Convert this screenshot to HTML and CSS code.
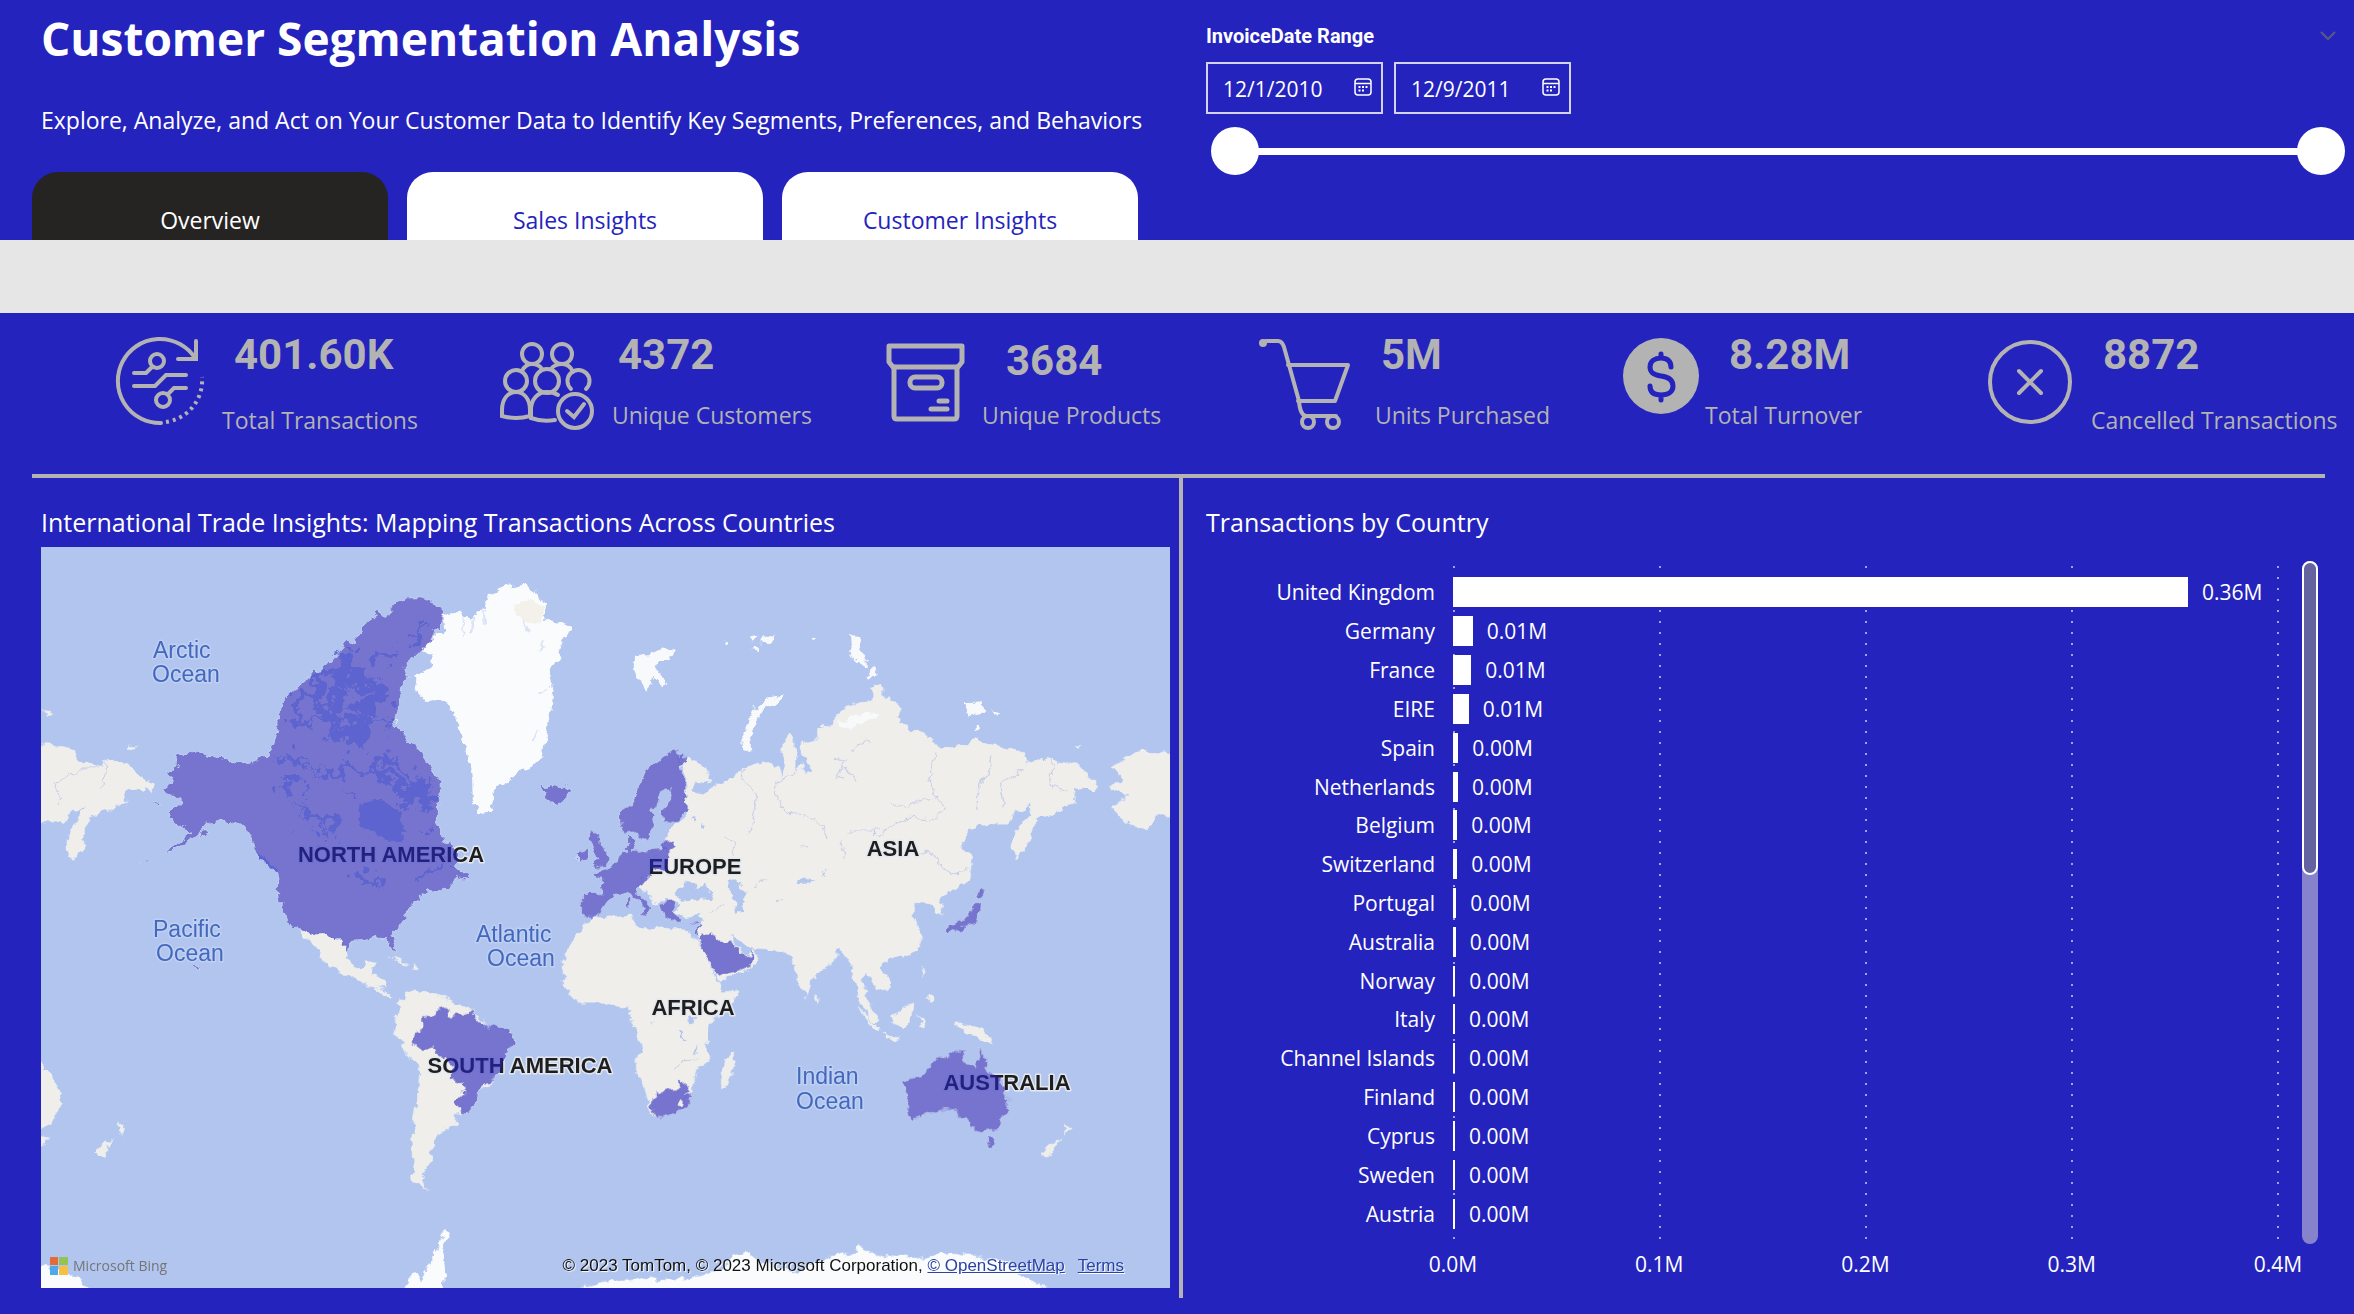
FILE: index.html
```html
<!DOCTYPE html>
<html lang="en">
<head>
<meta charset="utf-8">
<meta name="viewport" content="width=device-width, initial-scale=1">
<title>Customer Segmentation Analysis</title>
<link rel="stylesheet" href="styles.css">
</head>
<body>
<header class="top">
  <div class="intro">
    <h1 class="title">Customer Segmentation Analysis</h1>
    <p class="subtitle">Explore, Analyze, and Act on Your Customer Data to Identify Key Segments, Preferences, and Behaviors</p>
    <nav class="tabs">
      <button class="tab tab--active" type="button">Overview</button>
      <button class="tab" type="button">Sales Insights</button>
      <button class="tab" type="button">Customer Insights</button>
    </nav>
  </div>
  <section class="filter" aria-labelledby="filter-name">
    <div class="filter-head">
      <h2 class="filter-name" id="filter-name">InvoiceDate Range</h2>
      <button class="icon-button" type="button" aria-label="Filter options">
        <svg width="16" height="10" viewBox="0 0 16 10"><path d="M1 1l7 7 7-7" fill="none" stroke="#5b5a86" stroke-width="2"/></svg>
      </button>
    </div>
    <div class="dates">
      <div class="date">
        <input class="date-input" type="text" value="12/1/2010" aria-label="Start date">
        <button class="icon-button" type="button" aria-label="Pick start date">
          <svg width="18" height="18" viewBox="0 0 18 18"><rect x="1" y="1" width="16" height="16" rx="3" fill="none" stroke="#fff" stroke-width="1.5"/><path d="M1 5.5h16" stroke="#fff" stroke-width="1.5"/><path d="M4.5 9h2M8 9h2M11.500 9h2M4.500 12.500h2M8 12.500h2" stroke="#fff" stroke-width="2"/></svg>
        </button>
      </div>
      <div class="date">
        <input class="date-input" type="text" value="12/9/2011" aria-label="End date">
        <button class="icon-button" type="button" aria-label="Pick end date">
          <svg width="18" height="18" viewBox="0 0 18 18"><rect x="1" y="1" width="16" height="16" rx="3" fill="none" stroke="#fff" stroke-width="1.5"/><path d="M1 5.5h16" stroke="#fff" stroke-width="1.5"/><path d="M4.5 9h2M8 9h2M11.500 9h2M4.500 12.500h2M8 12.500h2" stroke="#fff" stroke-width="2"/></svg>
        </button>
      </div>
    </div>
    <div class="range">
      <input class="range-input range-input--track" type="range" min="0" max="373" value="0" aria-label="Range start">
      <input class="range-input" type="range" min="0" max="373" value="373" aria-label="Range end">
    </div>
  </section>
</header>
<div class="band"></div>
<main>
  <section class="kpis">
    <div class="kpi kpi--tall">
      <svg class="kpi-icon" viewBox="0 0 112 96"><g transform="translate(11 0)" fill="none" stroke="#b3b3b3" stroke-width="4" stroke-linecap="round"><path d="M78 21A42 42 0 1 0 44 86"/><path d="M79 4v18H61"/><path d="M49 85A42 42 0 0 0 85 40" stroke-dasharray="3 4" stroke-linecap="butt"/><circle cx="40" cy="24" r="7"/><path d="M35 30l-6 6H17M69 38H49L38 49H17M69 51H57l-6 6"/><circle cx="46" cy="63" r="7"/></g></svg>
      <div class="kpi-text kpi-text--mid"><p class="kpi-value">401.60K</p><p class="kpi-label">Total Transactions</p></div>
    </div>
    <div class="kpi">
      <svg class="kpi-icon" viewBox="0 0 112 96"><g transform="translate(4 6)" fill="none" stroke="#b3b3b3" stroke-width="4" stroke-linecap="round"><circle cx="32" cy="11" r="10"/><circle cx="62" cy="11" r="10"/><path d="M22 28c2-4 6-7 10-7s8 2 10 5M51 26c3-4 7-5 11-5 5 0 9 3 11 8"/><circle cx="16" cy="38" r="11"/><circle cx="47" cy="38" r="12"/><path d="M71 46a11 11 0 1 1 15 0"/><path d="M2 73v-6C2 56 8 49 16 49s14 7 14 18v6q-14 4-28 0z"/><path d="M58 52c-3-2-7-3-11-3-9 0-16 7-16 18v8q11 4 24 2"/><circle cx="75" cy="68" r="17"/><path d="M67 68l7 6 10-13"/></g></svg>
      <div class="kpi-text"><p class="kpi-value">4372</p><p class="kpi-label">Unique Customers</p></div>
    </div>
    <div class="kpi kpi--close">
      <svg class="kpi-icon" viewBox="0 0 112 96"><g transform="translate(20 6)" fill="none" stroke="#b3b3b3" stroke-width="5" stroke-linejoin="round" stroke-linecap="round"><path d="M3 3h73v16l-4 5H7l-4-5z"/><path d="M8 24v49q0 3 3 3h57q3 0 3-3V24"/><rect x="24" y="34" width="32" height="11" rx="5"/><path d="M53 58h8M45 66h16"/></g></svg>
      <div class="kpi-text kpi-text--far"><p class="kpi-value">3684</p><p class="kpi-label">Unique Products</p></div>
    </div>
    <div class="kpi">
      <svg class="kpi-icon" viewBox="0 0 112 96"><g transform="translate(0 2)" fill="none" stroke="#b3b3b3" stroke-width="4" stroke-linejoin="round" stroke-linecap="round"><path d="M4 5q0-3 4-3h11q4 0 6 6l15 54q1 14 7 15h30"/><path d="M29 26h60L76 62H39"/><circle cx="49" cy="83" r="6"/><circle cx="74" cy="83" r="6"/></g><circle cx="4" cy="6" r="4" fill="#b3b3b3"/></svg>
      <div class="kpi-text"><p class="kpi-value">5M</p><p class="kpi-label">Units Purchased</p></div>
    </div>
    <div class="kpi">
      <svg class="kpi-icon" viewBox="0 0 112 96"><g transform="translate(34 1)" fill="none" stroke-linecap="round"><circle cx="38" cy="38" r="38" fill="#b3b3b3"/><path d="M48 29c0-6-4-9-10-9s-11 3-11 9 4 8 11 9c8 1 12 4 12 10s-5 9-12 9-11-3-11-9M38 16v4M38 58v4" stroke="#2423bd" stroke-width="5"/></g></svg>
      <div class="kpi-text kpi-text--far"><p class="kpi-value">8.28M</p><p class="kpi-label">Total Turnover</p></div>
    </div>
    <div class="kpi kpi--tall">
      <svg class="kpi-icon" viewBox="0 0 112 96"><g transform="translate(13 3)" fill="none" stroke="#b3b3b3" stroke-width="4" stroke-linecap="round"><circle cx="42" cy="42" r="40"/><path d="M31 31l22 22M53 31L31 53"/></g></svg>
      <div class="kpi-text kpi-text--mid"><p class="kpi-value">8872</p><p class="kpi-label">Cancelled Transactions</p></div>
    </div>
  </section>
  <hr class="rule">
  <div class="panels">
    <section class="panel">
      <h2 class="panel-title">International Trade Insights: Mapping Transactions Across Countries</h2>
      <div class="map">
        <svg class="map-art" viewBox="41 547 1129 741" role="img" aria-label="World map of transactions">
          <defs>
            <filter id="coast" filterUnits="userSpaceOnUse" x="41" y="547" width="1129" height="741" color-interpolation-filters="sRGB"><feTurbulence type="fractalNoise" baseFrequency="0.11" numOctaves="3" seed="4" result="n"/><feDisplacementMap in="SourceGraphic" in2="n" scale="10" xChannelSelector="R" yChannelSelector="G"/></filter>
            <filter id="archipelago" filterUnits="userSpaceOnUse" x="41" y="547" width="1129" height="741" color-interpolation-filters="sRGB"><feTurbulence type="fractalNoise" baseFrequency="0.07" numOctaves="4" seed="9" result="n"/><feDisplacementMap in="SourceGraphic" in2="n" scale="46" xChannelSelector="R" yChannelSelector="G"/></filter>
            <g id="sales">
              <g transform="translate(30 490) scale(.3699 .3333)">
                <path d="M855 453L887 466 882 440 905 400 950 365 960 385 980 345 1015 325 1060 325 1095 340 1120 370 1110 400 1098 420 1075 460 1040 500 1010 525 1022 560 1000 600 998 630 985 690 978 712 1005 720 1015 745 1050 780 1078 825 1090 855 1118 880 1108 920 1100 950 1100 995 1120 1055 1150 1075 1160 1110 1150 1130 1180 1160 1178 1173 1150 1165 1125 1190 1095 1205 1075 1200 1050 1215 1055 1230 1030 1245 1015 1270 1015 1295 985 1320 975 1335 985 1370 983 1388 968 1360 962 1342 940 1340 915 1345 895 1348 870 1350 862 1365 860 1380 845 1360 835 1345 820 1350 800 1330 765 1330 725 1318 700 1300 678 1245 672 1200 675 1155 650 1130 625 1105 610 1075 595 1040 580 1005 550 995 520 990 480 1000 465 1020 440 1040 400 1075 360 1095 400 1060 435 1025 415 1015 385 990 375 965 400 945 412 930 395 920 372 915 362 900 390 880 375 845 395 835 400 800 445 778 485 798 530 808 560 820 600 818 640 800 650 790 672 700 670 695 685 632 718 598 730 590 765 548 782 550 800 525z"/>
                <path d="M1385 888L1400 903 1415 890 1435 895 1445 883 1460 905 1445 930 1420 938 1398 928z"/>
                <path d="M460 1030l15-5-5 12-10 8zM335 938l20 4-2 5zM290 1112l30-4v3zM440 1422l10 8 5 10-6-2z"/>
              </g>
              <g transform="translate(540 540) scale(.4082 .3333)">
                <path d="M325 632L358 650 345 680 352 730 362 800 340 840 305 845 298 815 310 790 322 765 318 748 300 750 290 785 272 820 280 855 265 900 245 905 240 880 225 870 205 875 197 855 195 810 225 790 245 745 255 700 290 660z"/>
                <path d="M215 888L228 895 230 915 225 932 260 930 300 925 315 935 312 990 270 990 268 1020 245 1032 235 1050 250 1075 270 1092 275 1102 262 1125 245 1120 260 1105 240 1080 220 1060 180 1062 160 1100 150 1115 125 1135 102 1122 102 1060 155 1062 150 1022 132 1000 160 990 190 965 200 940 215 930z"/>
                <path d="M292 1090L330 1082 330 1110 342 1140 320 1148 300 1125z"/><path d="M297 908L325 905 330 922 315 935 300 928z"/>
                <path d="M215 1070h6v35h-6zM370 1147l12-5-3 8zM388 1155l5-2-6 38-3-12z"/>
                <path d="M125 870L145 885 150 920 168 955 165 972 130 982 145 955 130 940 135 915 118 905z"/><path d="M98 935L120 925 120 957 98 965z"/>
                <path d="M387 1200L400 1178 420 1178 445 1205 470 1205 490 1245 515 1250 522 1230 520 1255 515 1280 480 1297 437 1308 415 1265 400 1235z"/>
                <path d="M1078 1042L1098 1058 1080 1070 1068 1077 1062 1065zM1064 1090L1078 1095 1075 1118 1067 1142 1037 1162 1000 1182 996 1165 1010 1153 1038 1140 1053 1125z"/>
              </g>
              <g transform="translate(30 900) scale(.3827 .3333)"><path d="M1025 348L1045 352 1060 345 1062 330 1090 323 1098 350 1145 342 1152 330 1165 358 1200 378 1240 385 1265 408 1263 430 1238 462 1235 500 1215 545 1190 550 1170 572 1168 600 1138 643 1110 608 1135 582 1130 550 1105 540 1105 500 1088 470 1057 458 1052 442 1020 447 998 428 1003 402 1025 395z"/></g>
              <g transform="translate(540 900) scale(.4209 .3333)">
                <path fill-rule="evenodd" d="M280 567L285 582 300 570 325 568 330 548 350 543 355 560 350 585 360 590 345 620 325 642 300 648 280 655 270 640 262 598 280 597zM325 600l8-3 6 7-6 12-8-2z"/>
                <path d="M865 545L915 520 920 500 950 475 965 480 970 455 1008 458 1005 485 1032 504 1045 448 1060 490 1070 520 1100 550 1113 595 1110 630 1095 655 1090 685 1050 692 1030 685 1015 655 1000 655 985 628 960 625 930 638 880 657 875 625z"/><path d="M1060 712L1082 712 1080 738 1071 746z"/>
              </g>
            </g>
          </defs>
          <rect x="41" y="547" width="1129" height="741" fill="#b1c5ee"/>
          <g filter="url(#coast)">
            <g id="land" fill="#efeeea" stroke="#c9d9f5" stroke-width="3" paint-order="stroke">
              <use href="#sales"/>
              <g transform="translate(30 490) scale(.3699 .3333)">
                <path d="M0 750L50 765 120 780 135 815 195 825 210 808 260 820 300 865 335 880 325 905 285 895 255 900 260 940 215 960 155 985 150 1020 145 1070 115 1110 100 1085 105 1030 130 980 150 955 110 960 90 1000 0 998z"/>
                <path d="M35 660l20 5-3 12zM268 768l20 2-10 12z"/>
              </g>
              <g transform="translate(540 540) scale(.4082 .3333)">
                <path d="M340 645L385 670 415 700 415 725 385 730 370 745 400 765 430 735 470 715 490 690 545 665 585 680 595 710 605 690 595 640 595 600 615 575 625 620 625 700 640 670 650 700 665 690 640 640 640 610 680 600 680 565 720 555 725 520 780 485 815 480 815 445 835 435 840 465 885 500 875 545 915 570 960 595 980 630 1030 620 1070 595 1120 620 1185 635 1190 670 1230 655 1260 665 1310 670 1345 710 1370 735 1350 750 1310 740 1305 790 1260 815 1215 835 1205 890 1170 955 1158 930 1165 880 1205 820 1195 800 1160 820 1145 850 1075 850 1030 910 1060 950 1050 1020 1010 1050 980 1075 990 1130 970 1120 960 1090 915 1095 910 1130 935 1180 925 1235 880 1255 845 1260 835 1290 858 1325 845 1355 820 1335 800 1305 785 1310 800 1380 825 1440 815 1445 785 1385 760 1275 735 1230 710 1265 665 1320 655 1372 630 1330 620 1260 600 1235 570 1228 525 1225 495 1210 465 1180 480 1220 500 1245 525 1232 537 1260 510 1290 440 1328 430 1300 400 1240 385 1200 390 1150 395 1125 360 1133 335 1115 345 1090 330 1080 300 1080 280 1090 255 1050 240 1030 270 980 300 925 310 890 330 850 360 835 355 700z"/>
                <path d="M1560 640L1460 635 1405 680 1430 715 1400 740 1440 770 1405 800 1440 850 1480 870 1515 825 1560 830zM1310 618l15-2-5 12z"/>
              </g>
              <g transform="translate(30 900) scale(.3827 .3333)">
                <path d="M700 92L775 100 800 125 815 118 830 150 828 180 850 205 870 205 880 185 900 185 890 225 925 235 925 262 905 260 942 290 935 294 895 258 850 240 820 222 780 195 760 165 735 125z"/>
                <path d="M965 300L990 275 1060 278 1090 300 1150 320 1160 345 1200 380 1260 400 1265 425 1235 465 1230 510 1215 545 1170 570 1165 605 1140 640 1110 645 1110 675 1075 690 1060 720 1045 760 1050 775 1035 800 1025 845 1040 872 1020 860 1000 843 1000 790 997 710 1010 620 1020 500 980 455 965 420 950 385 955 350 970 325z"/>
                <path d="M0 495L30 495 55 525 78 580 75 620 55 675 0 687zM218 712L190 774 172 760zM230 673L248 688 236 710zM28 708l15 5-5 20-10-3zM940 175l25 5 22 12-20-3zM1000 198l22 3-5 6-15-2z"/>
              </g>
              <g transform="translate(540 900) scale(.4209 .3333)">
                <path d="M120 55L215 45 220 70 260 90 280 80 350 95 375 130 395 170 420 245 430 275 468 272 460 310 400 370 395 440 405 480 375 510 370 555 345 600 330 635 280 655 265 640 250 570 230 520 228 475 245 460 225 375 210 320 150 310 90 310 55 250 55 180 75 130z"/>
                <path d="M460 455L465 480 445 555 430 560 425 520 435 490zM985 375L1015 375 1050 385 1080 430 1045 415 1010 395zM835 350L885 310 885 345 870 383 835 370zM755 318L812 395 795 392zM818 405L855 410 850 418 820 414zM1236 713L1209 774 1191 762zM1249 673L1262 690 1246 710zM652 286l9 12-6 7zM905 208l10 10-5 17zM925 280l12 8-6 14-9-2zM900 345l12 5-5 10 5 20-8-3z"/>
              </g>
            </g>
            <g fill="#fafbfc">
              <g transform="translate(30 490) scale(.3699 .3333)"><path d="M1120 420L1115 380 1160 365 1190 390 1235 350 1240 310 1290 290 1330 285 1365 300 1395 345 1390 390 1440 395 1465 410 1440 460 1425 510 1405 540 1415 600 1410 660 1395 740 1385 800 1350 835 1310 850 1295 880 1260 895 1245 965 1210 970 1197 930 1195 860 1180 780 1160 720 1140 650 1110 630 1075 640 1045 600 1040 560 1085 535 1080 495 1060 480 1090 440z"/><path d="M1300 340l55-10 35 20-5 40-40 10-30-30z" fill="#f3f1ea"/><path d="M1165 380l8 60M1200 385l-5 40M1225 355l5 45M1330 390l20 40M1390 450l-15 40M1400 600l-25 10M1375 720l-20 30" fill="none" stroke="#dbe4f5" stroke-width="6"/></g>
              <g transform="translate(540 540) scale(.4082 .3333)" fill="#f7f9fb"><path d="M230 350L265 345 300 325 328 335 320 360 290 360 285 390 310 430 295 435 280 410 262 460 245 420 230 390zM598 460L590 480 550 505 530 545 515 600 518 632 500 620 490 610 505 560 520 510 555 480zM762 285l20 3 2 35 14 30 0 28-22-10-18-35 6-20zM803 392l15-17 12 30-22 8zM1040 490l45-3v30l-35 8zM1105 505l20 15-12 5zM510 290l20-5 5 12-15 10zM545 285l30 5-5 18-30 2zM450 305l15 2-5 10zM520 320l20 2-5 12zM665 290l12 2-8 6zM1065 555l10 2v20l-10-4zM730 545l70-30 30 10-50 35-45 5z"/></g>
              <g transform="translate(30 900) scale(.3827 .3333)"><path d="M0 1095L28 1095 80 1110 130 1140 190 1185 0 1185zM1090 985L1097 1005 1075 1040 1085 1110 1080 1185 960 1185 1005 1120 1025 1140 1045 1085 1062 1045z"/></g>
              <g transform="translate(540 900) scale(.4209 .3333)"><path d="M50 1185L150 1145 230 1135 300 1140 370 1130 430 1110 460 1070 490 1053 520 1085 610 1120 690 1065 750 1060 755 1040 780 1055 830 1070 860 1065 900 1075 960 1060 1040 1065 1110 1085 1150 1130 1230 1185z"/></g>
            </g>
            <g fill="#b1c5ee">
              <g transform="translate(540 540) scale(.4082 .3333)"><path d="M335 1060L350 1030 380 1022 385 1040 400 1035 425 1065 420 1080 385 1078 345 1082zM465 1022L495 1020 498 1050 500 1120 480 1120 478 1085 462 1050zM630 1020l35-2 8 8-40 3zM1020 1000l10 2-5 6zM395 855l14 5-4 12zM370 830l14 3-8 14zM695 990l8 15-6 2zM815 870l8 20-5 3z"/></g>
              <g transform="translate(30 490) scale(.3699 .3333)"><path d="M885 960L910 930 960 935 1000 970 1010 1010 1000 1055 970 1055 930 1030 895 1010zM610 1078l14 14 26 25 22 30-10 0-35-35z"/></g>
              <g transform="translate(540 900) scale(.4209 .3333)"><path d="M352 345l14 5-4 25-8-2zM330 385l4 0 2 25 12 15-6 2-12-15zM262 368l8 2-4 8zM365 430l4 0 3 32-5-2z"/></g>
            </g>
            <g fill="none" stroke="#c9cfe6" stroke-width="3">
              <path transform="translate(540 540) scale(.4082 .3333)" d="M495 690L500 730 530 770 520 850 510 885M625 700L580 730 580 780 605 820 650 825 690 855 705 900M970 640L950 720 975 775 995 800 970 840 900 835 850 865 830 895M855 790L900 800 930 780 970 775M1110 640L1100 700 1075 730 1070 810M1190 680L1130 730 1140 800M1255 665L1255 740 1290 755M720 655L745 660 740 690 725 710 745 715M745 680L775 725M760 635L800 600 815 605M755 870L830 870M930 935L960 940 985 985 1020 1005 1050 980M450 895L480 905 470 945M640 920h20M530 1040l20-25M580 1075l15 5M415 1120l40-30M740 910l10 40"/>
              <path transform="translate(30 490) scale(.3699 .3333)" d="M195 825L130 845 65 880 85 920 70 950M205 820L200 885 190 900"/>
              <path transform="translate(540 900) scale(.4209 .3333)" d="M320 505L340 482 370 480"/>
            </g>
          </g>
          <g filter="url(#archipelago)">
            <g transform="translate(30 490) scale(.3699 .3333)">
              <path fill="#b1c5ee" d="M855 470L870 500 890 540 940 570 980 600 975 640 930 650 940 690 970 712 990 745 960 720 930 700 900 720 890 800 870 840 850 780 845 720 820 750 780 730 740 710 720 690 700 650 710 620 760 570 810 530zM670 780L720 800 770 845 830 820 900 840 940 830 960 790 980 780 1000 830 1060 870 1095 890 1085 940 1080 1000 1060 1000 1040 960 1010 930 970 900 940 850 880 850 790 850 720 820zM670 870l45 5 10 20-40 15zM750 985l60-10 5 35-45 5zM735 930l12 60-8 10zM860 880l14 50-10 5zM815 1000l16 40-14 10zM930 1150l20 20-8 50-14-40zM880 1140l40 10 20 20-40-5zM1090 1100l50-15 0 30-50 30-20 25-10-20 30-30zM915 500l50-30 6 20-40 30zM1010 450l50-40 6 14-50 40z"/>
              <path fill="#efeeea" d="M760 590l50-20 20 40-50 20zM850 590l50 0 10 50-50 10zM720 640l60 0 20 40-60 10zM880 520l50 20 30 50-50-10zM820 660l60-10 20 30-70 15zM750 700l60-10 30 40-60 20zM840 790l60-20 20 40-60 10zM960 820l40 20 30 50-40-10zM1020 930l40 10 10 60-40-20zM920 700l50 10 10 40-50 0z"/>
            </g>
          </g>
          <g class="ocean">
            <text x="153" y="658">Arctic</text><text x="152" y="682">Ocean</text>
            <text x="153" y="937">Pacific</text><text x="156" y="961">Ocean</text>
            <text x="476" y="942">Atlantic</text><text x="487" y="966">Ocean</text>
            <text x="796" y="1084">Indian</text><text x="796" y="1109">Ocean</text>
          </g>
          <g class="continent">
            <text x="391" y="862">NORTH AMERICA</text>
            <text x="695" y="874">EUROPE</text>
            <text x="893" y="856">ASIA</text>
            <text x="693" y="1015">AFRICA</text>
            <text x="520" y="1073">SOUTH AMERICA</text>
            <text x="1007" y="1090">AUSTRALIA</text>
          </g>
          <g filter="url(#coast)"><use href="#sales" fill="#2423bd" fill-opacity=".6"/></g>
        </svg>
        <div class="map-foot">
          <span class="bing"><svg width="18" height="18" viewBox="0 0 18 18"><path fill="#e36b3a" d="M0 0h8v8H0z"/><path fill="#95c353" d="M9 0h9v8H9z"/><path fill="#4fa8ea" d="M0 9h8v9H0z"/><path fill="#f5c043" d="M9 9h9v9H9z"/></svg>Microsoft Bing</span>
          <span class="credit">© 2023 TomTom, © 2023 Microsoft Corporation, <a href="#osm">© OpenStreetMap</a><a class="terms" href="#terms">Terms</a></span>
        </div>
      </div>
    </section>
    <div class="divider"></div>
    <section class="panel">
      <h2 class="panel-title">Transactions by Country</h2>
      <div class="chart">
        <div class="plot">
          <div class="grid-lines"><i></i><i></i><i></i><i></i><i></i></div>
          <ul class="bars">
            <li><span class="name">United Kingdom</span><span class="bar" style="width:89.1%"></span><span class="amount">0.36M</span></li>
            <li><span class="name">Germany</span><span class="bar" style="width:2.4%"></span><span class="amount">0.01M</span></li>
            <li><span class="name">France</span><span class="bar" style="width:2.2%"></span><span class="amount">0.01M</span></li>
            <li><span class="name">EIRE</span><span class="bar" style="width:1.9%"></span><span class="amount">0.01M</span></li>
            <li><span class="name">Spain</span><span class="bar" style="width:.65%"></span><span class="amount">0.00M</span></li>
            <li><span class="name">Netherlands</span><span class="bar" style="width:.62%"></span><span class="amount">0.00M</span></li>
            <li><span class="name">Belgium</span><span class="bar" style="width:.52%"></span><span class="amount">0.00M</span></li>
            <li><span class="name">Switzerland</span><span class="bar" style="width:.5%"></span><span class="amount">0.00M</span></li>
            <li><span class="name">Portugal</span><span class="bar" style="width:.38%"></span><span class="amount">0.00M</span></li>
            <li><span class="name">Australia</span><span class="bar" style="width:.34%"></span><span class="amount">0.00M</span></li>
            <li><span class="name">Norway</span><span class="bar" style="width:.28%"></span><span class="amount">0.00M</span></li>
            <li><span class="name">Italy</span><span class="bar" style="width:.25%"></span><span class="amount">0.00M</span></li>
            <li><span class="name">Channel Islands</span><span class="bar" style="width:.24%"></span><span class="amount">0.00M</span></li>
            <li><span class="name">Finland</span><span class="bar" style="width:.24%"></span><span class="amount">0.00M</span></li>
            <li><span class="name">Cyprus</span><span class="bar" style="width:.24%"></span><span class="amount">0.00M</span></li>
            <li><span class="name">Sweden</span><span class="bar" style="width:.24%"></span><span class="amount">0.00M</span></li>
            <li><span class="name">Austria</span><span class="bar" style="width:.24%"></span><span class="amount">0.00M</span></li>
          </ul>
        </div>
        <div class="scroll"><div class="scroll-thumb"></div></div>
        <div class="axis"><span>0.0M</span><span>0.1M</span><span>0.2M</span><span>0.3M</span><span>0.4M</span></div>
      </div>
    </section>
  </div>
</main>
</body>
</html>
```
FILE: styles.css
```css
* { box-sizing: border-box; }

body {
  margin: 0;
  background: #2423bd;
  color: #fff;
  font-family: "Open Sans", "Noto Sans", sans-serif;
}

h1, h2, p, ul { margin: 0; padding: 0; }
button, input { font: inherit; color: inherit; }

.top {
  display: grid;
  grid-template-columns: minmax(0, 1206fr) minmax(0, 1148fr);
}

.intro { padding-left: 41px; }

.title {
  font-size: 46px;
  line-height: 76px;
  font-weight: 700;
  white-space: nowrap;
}

.subtitle {
  margin-top: 26px;
  font-size: 23px;
  line-height: 36px;
  white-space: nowrap;
}

.tabs {
  display: grid;
  grid-template-columns: repeat(3, 1fr);
  gap: 19px;
  margin: 34px 68px 0 -9px;
}

.tab {
  padding: 30px 0 2px;
  border: 0;
  border-radius: 26px 26px 0 0;
  background: #fff;
  color: #2423bd;
  font-size: 23px;
  line-height: 36px;
}

.tab--active { background: #252423; color: #fff; }

.filter { padding: 24px 9px 0 0; }

.filter-head {
  display: flex;
  align-items: center;
  justify-content: space-between;
  padding-right: 9px;
}

.filter-name {
  font-family: Roboto, sans-serif;
  font-size: 20px;
  line-height: 24px;
  font-weight: 700;
}

.icon-button {
  display: flex;
  padding: 0;
  border: 0;
  background: none;
}

.dates { display: flex; gap: 11px; margin-top: 14px; }

.date {
  display: flex;
  align-items: center;
  width: 177px;
  height: 52px;
  padding: 2px 9px 0 15px;
  border: 2px solid #d3d3f1;
}

.date .icon-button { margin-bottom: 5px; }

.date-input {
  flex: 1;
  min-width: 0;
  padding: 0;
  border: 0;
  background: none;
  font-size: 21px;
  line-height: 28px;
}

.range { display: grid; margin: 13px 0 0 5px; }

.range-input {
  grid-area: 1 / 1;
  width: 100%;
  height: 48px;
  margin: 0;
  appearance: none;
  background: none;
  pointer-events: none;
}

.range-input--track {
  background: linear-gradient(#fff, #fff) center / calc(100% - 48px) 7px no-repeat;
}

.range-input::-webkit-slider-thumb {
  appearance: none;
  width: 48px;
  height: 48px;
  border-radius: 50%;
  background: #fff;
  pointer-events: auto;
}

.band { height: 73px; background: #e6e6e6; }

.kpis {
  display: grid;
  grid-template-columns: 390fr 370fr 393fr 330fr 386fr 379fr;
  padding: 18px 0 36px 106px;
  color: #b3b3b3;
}

.kpi { display: flex; gap: 4px; min-width: 0; }
.kpi-icon { flex: none; width: 112px; height: 96px; margin-top: 6px; overflow: visible; }
.kpi-text { white-space: nowrap; }

.kpi-value {
  padding-left: 6px;
  font-family: Roboto, sans-serif;
  font-size: 42px;
  line-height: 48px;
  font-weight: 700;
}

.kpi-text--mid .kpi-value { padding-left: 12px; }
.kpi-text--far .kpi-value { padding-left: 24px; }

.kpi-label { margin-top: 18px; font-size: 23px; line-height: 36px; }
.kpi--tall .kpi-label { margin-top: 23px; }
.kpi--close .kpi-value { padding-top: 6px; }
.kpi--close .kpi-label { margin-top: 12px; }

.rule {
  height: 4px;
  margin: 0 29px 0 32px;
  border: 0;
  background: #b3b3b3;
}

.panels {
  display: grid;
  grid-template-columns: minmax(0, 1129fr) 4px minmax(0, 1126fr);
  column-gap: 9px;
  padding: 0 36px 16px 41px;
}

.panel { display: flex; flex-direction: column; padding: 24px 0 10px; }
.divider + .panel { padding-left: 14px; }

.panel-title {
  margin-bottom: 5px;
  font-size: 25px;
  line-height: 40px;
  font-weight: 400;
  white-space: nowrap;
}

.divider { background: #b3b3b3; }

.map { position: relative; }
.map-art { display: block; width: 100%; height: auto; }

.ocean, .continent {
  font-family: "Liberation Sans", Arial, sans-serif;
  font-size: 22px;
  paint-order: stroke;
  stroke-width: 3px;
  stroke-linejoin: round;
}

.ocean { font-size: 23px; fill: #4368bd; stroke: #bfd0f3; }
.continent { font-weight: 700; fill: #1e1e1e; stroke: #e3e7ef; text-anchor: middle; }

.map-foot {
  position: absolute;
  left: 9px;
  right: 46px;
  bottom: 10px;
  display: flex;
  align-items: center;
  justify-content: space-between;
  line-height: 24px;
}

.bing { display: flex; align-items: center; gap: 5px; color: #757575; font-size: 14px; }

.credit {
  color: #111;
  font-family: "Liberation Sans", Arial, sans-serif;
  font-size: 17px;
  text-shadow: 1px 1px 1px #fff;
}

.credit a { color: #2a43a5; }
.terms { margin-left: 13px; }

.chart {
  flex: 1;
  display: grid;
  grid-template-columns: minmax(0, 1fr) 16px;
  grid-template-rows: 1fr 28px;
  column-gap: 24px;
  row-gap: 4px;
  padding: 14px 0 10px;
  font-size: 21px;
  line-height: 28px;
}

.plot, .axis { --label: 247px; }
.plot { display: grid; padding-top: 5px; }
.grid-lines, .bars { grid-area: 1 / 1; }

.grid-lines {
  display: flex;
  justify-content: space-between;
  margin-left: var(--label);
  margin-right: -1px;
}

.grid-lines i {
  width: 2px;
  background: linear-gradient(#a3a3da 2px, transparent 2px) 0 0 / 2px 11px;
}

.bars {
  display: grid;
  grid-auto-rows: 1fr;
  padding: 7px 0 13px var(--label);
  list-style: none;
}

.bars li { display: flex; align-items: center; }

.name {
  flex: none;
  width: var(--label);
  margin-left: calc(0px - var(--label));
  padding-right: 18px;
  text-align: right;
}

.bar { flex: none; height: 30px; background: #fff; }
.amount { margin-left: 14px; }

.scroll { border-radius: 8px; background: #8683cc; margin-bottom: 2px; }

.scroll-thumb {
  height: 46%;
  border: 2px solid #fff;
  border-radius: 8px;
  background: #65639f;
}

.axis {
  display: flex;
  justify-content: space-between;
  margin-left: var(--label);
}

.axis span { display: flex; justify-content: center; width: 0; }
```
